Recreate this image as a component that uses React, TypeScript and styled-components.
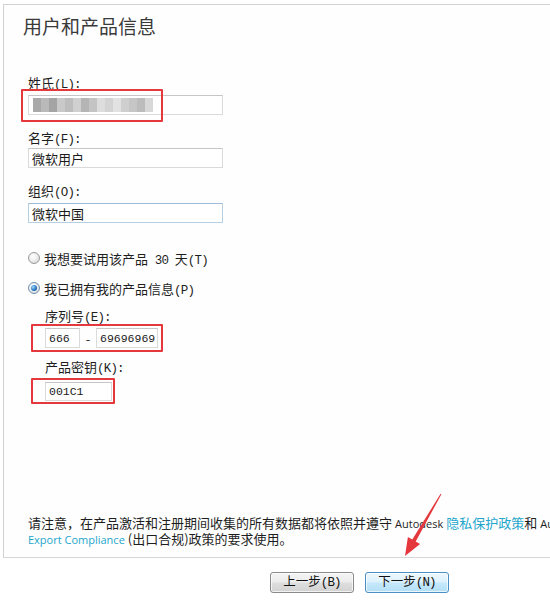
import React from "react";
import styled, { createGlobalStyle, css } from "styled-components";

const Global = createGlobalStyle`
  html, body { margin: 0; padding: 0; background: #ffffff; }
  body { overflow: hidden; font-family: "Noto Sans CJK SC", "Noto Sans", sans-serif; color: #222; }
  #root { width: 550px; height: 605px; }
`;

const Page = styled.div`
  position: relative;
  width: 550px;
  height: 605px;
  overflow: hidden;
  background: #ffffff;
  padding-top: 4px;
  box-sizing: border-box;
`;

const Panel = styled.div`
  margin-left: 3px;
  width: 570px;
  height: 554px;
  box-sizing: border-box;
  border-top: 1px solid #d2d2d2;
  border-left: 1px solid #d2d2d2;
  border-bottom: 1px solid #d6d6d6;
  background: #fefefe;
  display: flex;
  flex-direction: column;
  padding: 9px 0 10px 24px;
`;

const Title = styled.h1`
  margin: 0 0 0 -5px;
  font-size: 19px;
  line-height: 24px;
  font-weight: 400;
  color: #3a3a3a;
`;

const Field = styled.div<{ $mt: number }>`
  display: flex;
  flex-direction: column;
  align-items: flex-start;
  margin-top: ${(p) => p.$mt}px;
`;

const Label = styled.label<{ $mb?: number }>`
  font-size: 13px;
  line-height: 16px;
  height: 16px;
  color: #1e1e1e;
  margin-bottom: ${(p) => p.$mb ?? 3}px;
  white-space: nowrap;
`;

const Mn = styled.span`
  font-family: "Liberation Mono", "DejaVu Sans Mono", monospace;
  font-size: 12.5px;
  letter-spacing: -0.8px;
`;

const InputWrap = styled.div`
  position: relative;
  display: flex;
  align-items: center;
`;

const TextBox = styled.div<{ $w: number; $h?: number; $focus?: boolean; $mono?: boolean }>`
  width: ${(p) => p.$w}px;
  height: ${(p) => p.$h ?? 20}px;
  box-sizing: border-box;
  border: 1px solid #dadada;
  border-top-color: #c6c6c6;
  background: #fff;
  padding: 0 3px;
  display: flex;
  align-items: center;
  font-size: 13px;
  color: #1a1a1a;
  ${(p) =>
    p.$focus &&
    css`
      border-color: #b7cfe3;
      border-top-color: #9fbbd6;
    `}
  ${(p) =>
    p.$mono &&
    css`
      font-family: "Liberation Mono", "DejaVu Sans Mono", monospace;
      font-size: 11.5px;
    `}
`;

const Blurred = styled.div`
  display: flex;
  height: 14px;
  margin-left: 1px;
`;

const Pixel = styled.span<{ $c: string }>`
  width: 8px;
  height: 14px;
  background: ${(p) => p.$c};
`;

const Highlight = styled.div<{ $l: number; $t: number; $w: number; $h: number }>`
  position: absolute;
  left: ${(p) => p.$l}px;
  top: ${(p) => p.$t}px;
  width: ${(p) => p.$w}px;
  height: ${(p) => p.$h}px;
  box-sizing: border-box;
  border: 2px solid #e5383d;
  border-radius: 1px;
  pointer-events: none;
`;

const RadioRow = styled.div<{ $mt: number }>`
  display: flex;
  align-items: center;
  gap: 4px;
  height: 16px;
  margin-top: ${(p) => p.$mt}px;
  font-size: 13px;
  color: #1e1e1e;
  white-space: nowrap;
`;

const Radio = styled.span<{ $checked?: boolean }>`
  position: relative;
  flex: none;
  width: 12px;
  height: 12px;
  border-radius: 50%;
  box-sizing: border-box;
  border: 1px solid #9a9a9a;
  background: radial-gradient(circle at 40% 35%, #ffffff 0%, #eeeeee 45%, #cfcfcf 100%);
  ${(p) =>
    p.$checked &&
    css`
      border-color: #6f8fae;
      &::after {
        content: "";
        position: absolute;
        left: 2px;
        top: 2px;
        width: 6px;
        height: 6px;
        border-radius: 50%;
        background: radial-gradient(circle at 35% 35%, #9fd8ff 0%, #2b79c4 55%, #123e77 100%);
      }
    `}
`;

const SubSection = styled.div`
  padding-left: 17px;
  display: flex;
  flex-direction: column;
  align-items: flex-start;
`;

const SerialRow = styled.div`
  display: flex;
  align-items: center;
`;

const Dash = styled.span`
  width: 16px;
  text-align: center;
  font-size: 13px;
  color: #333;
`;

const Notice = styled.div`
  margin-top: auto;
  font-size: 13px;
  color: #1e1e1e;
  white-space: nowrap;
`;

const NoticeLine = styled.div`
  display: flex;
  align-items: center;
  height: 16px;
  line-height: 16px;
  white-space: nowrap;
`;

const Latin = styled.span<{ $link?: boolean; $lead?: boolean }>`
  font-family: "Open Sans", "Noto Sans", sans-serif;
  font-size: 11px;
  line-height: 15px;
  color: ${(p) => (p.$link ? "#23a6cc" : "#1e1e1e")};
  margin: ${(p) => (p.$lead ? "0 3px 0 0" : "0 3px")};
`;

const LinkCn = styled.span`
  color: #23a6cc;
`;

const Footer = styled.div`
  display: flex;
  justify-content: flex-end;
  gap: 11px;
  padding: 14px 101px 0 0;
`;

const Button = styled.button<{ $primary?: boolean }>`
  width: 84px;
  height: 21px;
  box-sizing: border-box;
  border-radius: 3px;
  font-family: "Noto Sans CJK SC", sans-serif;
  font-size: 12.5px;
  line-height: 1;
  color: #111;
  padding: 0;
  border: 1px solid #8a8a8a;
  background: linear-gradient(#f4f4f4 0%, #ececec 48%, #dedede 52%, #d2d2d2 100%);
  box-shadow: inset 0 0 0 1px rgba(255, 255, 255, 0.7);
  ${(p) =>
    p.$primary &&
    css`
      border-color: #4b8ec3;
      background: linear-gradient(#eef8fe 0%, #dcf1fd 48%, #c6e8fc 52%, #b3dff6 100%);
    `}
`;

const Arrow = styled.svg`
  position: absolute;
  left: 395px;
  top: 485px;
  width: 56px;
  height: 76px;
  pointer-events: none;
`;

const blurColors = [
  "#a9a9a9", "#b9b9b9", "#a4a4a4", "#c9c9c9", "#bdbdbd", "#d0d0d0", "#b5b5b5", "#c4c4c4",
  "#dddddd", "#d3d3d3", "#e2e2e2", "#cfcfcf", "#c6c6c6", "#bcbcbc", "#d8d8d8",
];

export default function App() {
  return (
    <Page>
      <Global />
      <Panel>
        <Title>用户和产品信息</Title>

        <Field $mt={37}>
          <Label $mb={4}>
            姓氏<Mn>(L):</Mn>
          </Label>
          <InputWrap>
            <TextBox $w={195}>
              <Blurred>
                {blurColors.map((c, i) => (
                  <Pixel key={i} $c={c} />
                ))}
              </Blurred>
            </TextBox>
            <Highlight $l={-7} $t={-6} $w={142} $h={33} />
          </InputWrap>
        </Field>

        <Field $mt={15}>
          <Label $mb={2}>
            名字<Mn>(F):</Mn>
          </Label>
          <TextBox $w={195}>微软用户</TextBox>
        </Field>

        <Field $mt={15}>
          <Label $mb={4}>
            组织<Mn>(O):</Mn>
          </Label>
          <TextBox $w={195} $focus>微软中国</TextBox>
        </Field>

        <RadioRow $mt={27}>
          <Radio />
          <span>
            我想要试用该产品<Mn> 30 </Mn>天<Mn>(T)</Mn>
          </span>
        </RadioRow>
        <RadioRow $mt={14}>
          <Radio $checked />
          <span>
            我已拥有我的产品信息<Mn>(P)</Mn>
          </span>
        </RadioRow>

        <SubSection>
          <Field $mt={12}>
            <Label $mb={4}>
              序列号<Mn>(E):</Mn>
            </Label>
            <InputWrap>
              <SerialRow>
                <TextBox $w={35} $mono>666</TextBox>
                <Dash>-</Dash>
                <TextBox $w={62} $mono>69696969</TextBox>
              </SerialRow>
              <Highlight $l={-14} $t={-4} $w={132} $h={28} />
            </InputWrap>
          </Field>

          <Field $mt={11}>
            <Label $mb={7}>
              产品密钥<Mn>(K):</Mn>
            </Label>
            <InputWrap>
              <TextBox $w={67} $h={19} $mono>001C1</TextBox>
              <Highlight $l={-14} $t={-4} $w={84} $h={26} />
            </InputWrap>
          </Field>
        </SubSection>

        <Notice>
          <NoticeLine>
            请注意，在产品激活和注册期间收集的所有数据都将依照并遵守
            <Latin>Autodesk</Latin>
            <LinkCn>隐私保护政策</LinkCn>和<Latin>Autodesk</Latin>
          </NoticeLine>
          <NoticeLine>
            <Latin $link $lead>Export Compliance</Latin>
            (出口合规)政策的要求使用。
          </NoticeLine>
        </Notice>
      </Panel>

      <Footer>
        <Button>
          上一步<Mn>(B)</Mn>
        </Button>
        <Button $primary>
          下一步<Mn>(N)</Mn>
        </Button>
      </Footer>

      <Arrow viewBox="0 0 56 76">
        <polygon
          points="45.6,8.75 46.4,9.25 20.7,56.4 25.1,58.9 10,71 12.9,51.9 17.3,54.4"
          fill="#e5383d"
        />
      </Arrow>
    </Page>
  );
}
